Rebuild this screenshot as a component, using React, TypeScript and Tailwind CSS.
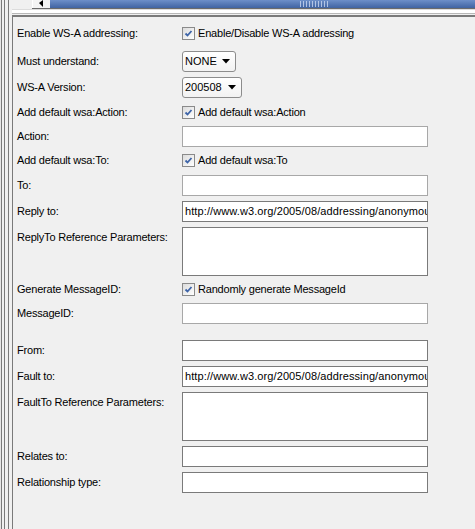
import React from "react";

const font = { fontFamily: '"Liberation Sans", Arial, sans-serif' };

function Check({ label }: { label: string }) {
  return (
    <div className="flex items-center h-full">
      <div className="w-[13px] h-[13px] border border-[#8a8a8a] bg-gradient-to-br from-[#dcdcdc] to-[#ffffff] flex items-center justify-center">
        <svg width="9" height="9" viewBox="0 0 9 9">
          <path d="M1.5 4.5 L3.5 6.5 L7.5 2" stroke="#3d64a8" strokeWidth="1.8" fill="none" />
        </svg>
      </div>
      <span className="ml-[3px] text-[11px] tracking-[-0.2px] text-black">{label}</span>
    </div>
  );
}

function Combo({ value, w }: { value: string; w: string }) {
  return (
    <div className={`${w} h-[21px] border border-[#8c8c8c] rounded-[3px] bg-gradient-to-b from-[#ffffff] to-[#f2f2f2] flex items-center pl-[2px] pr-[5px] justify-between`}>
      <span className="text-[11px] text-black">{value}</span>
      <svg width="8" height="5" viewBox="0 0 8 5">
        <path d="M0 0 L8 0 L4 4.5 Z" fill="#000" />
      </svg>
    </div>
  );
}

function Field({ value, disabled, tall }: { value?: string; disabled?: boolean; tall?: boolean }) {
  return (
    <div
      className={`w-[246px] ${tall ? "h-[49px]" : "h-[21px]"} bg-white border ${
        disabled ? "border-[#a8a8a8]" : "border-[#7a7a7a]"
      } overflow-hidden whitespace-nowrap pl-[2px] ${tall ? "" : "flex items-center"}`}
    >
      {value ? <span className="text-[11px] tracking-[0.1px] text-black">{value}</span> : null}
    </div>
  );
}

function Row({ label, mt, children, tall }: { label: string; mt: string; children: React.ReactNode; tall?: boolean }) {
  return (
    <div className={`flex ${mt} ${tall ? "h-[49px]" : "h-[21px]"}`}>
      <div className="w-[165px] h-[21px] flex items-center text-[11px] tracking-[-0.2px] text-black">{label}</div>
      <div className="flex-1 h-full">{children}</div>
    </div>
  );
}

export default function App() {
  const url = "http://www.w3.org/2005/08/addressing/anonymous";
  return (
    <div className="w-[475px] h-[529px] bg-[#f0f0f0] flex overflow-hidden" style={font}>
      {/* left decoration lines */}
      <div className="w-[12px] h-full flex shrink-0">
        <div className="w-[1px] bg-[#e6e6e6]" />
        <div className="w-[1px] bg-[#7a7a7a]" />
        <div className="w-[2px] bg-[#f0f0f0]" />
        <div className="w-[1px] bg-[#7a7a7a]" />
        <div className="w-[3px] bg-[#f0f0f0]" />
        <div className="w-[1px] bg-[#7a7a7a]" />
        <div className="w-[3px] bg-[#f0f0f0]" />
      </div>
      <div className="flex-1 flex flex-col h-full">
        {/* top scrollbar strip */}
        <div className="h-[8px] flex shrink-0">
          <div className="w-[20px] bg-[#f0f0f0]" />
          <div className="w-[18px] bg-[#f4f4f4] border-l border-white flex items-start pl-[6px]">
            <svg width="5" height="7" viewBox="0 0 5 7">
              <path d="M4 0 L0 3 L4 7 Z" fill="#000" />
            </svg>
          </div>
          <div className="flex-1 bg-gradient-to-b from-[#6d8fc9] to-[#4064a2] flex items-start pl-[250px]">
            <div className="w-[30px] h-[6px] mt-[1px] bg-[repeating-linear-gradient(90deg,#c8d6f0_0px,#c8d6f0_1px,transparent_1px,transparent_3px)] opacity-80" />
          </div>
        </div>
        <div className="h-[1px] bg-[#6b6b6b] ml-[20px] shrink-0" />
        <div className="h-[1px] bg-[#dcdcdc] shrink-0" />
        <div className="h-[3px] bg-white shrink-0" />
        <div className="h-[1px] bg-[#b8b8b8] shrink-0" />
        <div className="h-[1px] bg-[#f0f0f0] shrink-0" />
        {/* panel */}
        <div className="flex-1 border-t-2 border-l border-[#7a7a7a] pl-[4px] flex flex-col">
          <Row label="Enable WS-A addressing:" mt="mt-[6px]">
            <Check label="Enable/Disable WS-A addressing" />
          </Row>
          <Row label="Must understand:" mt="mt-[7px]">
            <Combo value="NONE" w="w-[54px]" />
          </Row>
          <Row label="WS-A Version:" mt="mt-[5px]">
            <Combo value="200508" w="w-[60px]" />
          </Row>
          <Row label="Add default wsa:Action:" mt="mt-[4px]">
            <Check label="Add default wsa:Action" />
          </Row>
          <Row label="Action:" mt="mt-[3px]">
            <Field disabled />
          </Row>
          <Row label="Add default wsa:To:" mt="mt-[3px]">
            <Check label="Add default wsa:To" />
          </Row>
          <Row label="To:" mt="mt-[4px]">
            <Field disabled />
          </Row>
          <Row label="Reply to:" mt="mt-[5px]">
            <Field value={url} />
          </Row>
          <Row label="ReplyTo Reference Parameters:" mt="mt-[5px]" tall>
            <Field tall />
          </Row>
          <Row label="Generate MessageID:" mt="mt-[3px]">
            <Check label="Randomly generate MessageId" />
          </Row>
          <Row label="MessageID:" mt="mt-[3px]">
            <Field disabled />
          </Row>
          <Row label="From:" mt="mt-[16px]">
            <Field />
          </Row>
          <Row label="Fault to:" mt="mt-[5px]">
            <Field value={url} />
          </Row>
          <Row label="FaultTo Reference Parameters:" mt="mt-[5px]" tall>
            <Field tall />
          </Row>
          <Row label="Relates to:" mt="mt-[5px]">
            <Field />
          </Row>
          <Row label="Relationship type:" mt="mt-[5px]">
            <Field />
          </Row>
        </div>
      </div>
    </div>
  );
}
